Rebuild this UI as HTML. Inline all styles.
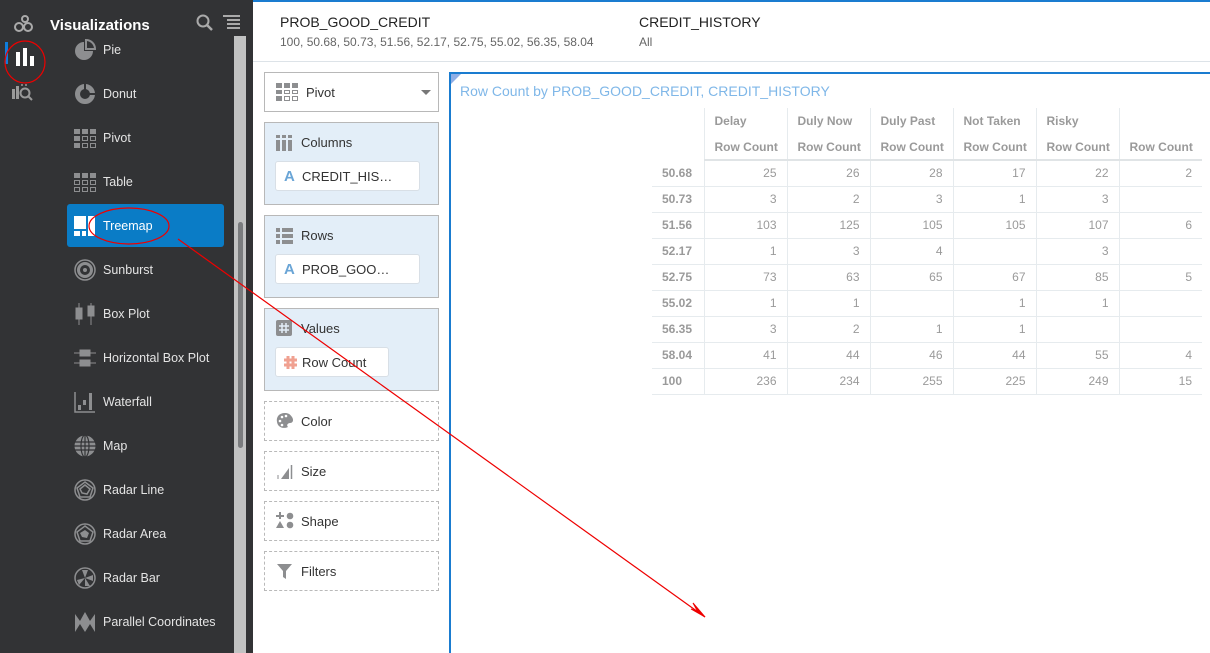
<!DOCTYPE html>
<html><head><meta charset="utf-8"><style>
*{margin:0;padding:0;box-sizing:border-box}
body{width:1210px;height:653px;overflow:hidden;background:#fff;font-family:"Liberation Sans",sans-serif;position:relative}
.side{position:absolute;left:0;top:0;width:253px;height:653px;background:#323335}
.a{position:absolute}
.item{position:absolute;left:103px;color:#e4e4e4;font-size:12.5px}
.ic{position:absolute;left:74px;width:22px;height:22px}
.sb{position:absolute;left:234px;top:36px;width:12px;height:617px;background:#c1c2c2}
.th{position:absolute;left:238px;top:222px;width:5px;height:226px;background:#7a7c7e;border-radius:3px}
.box{position:absolute;left:264px;width:175px;background:#e3eef8;border:1px solid #b8b8b8}
.box .t{position:absolute;left:36px;top:12px;font-size:13px;color:#333}
.pill{position:absolute;left:10px;top:38px;height:30px;background:#fff;border:1px solid #d8dfe6;border-radius:3px;font-size:13px;color:#333;padding:7px 0 0 26px;white-space:nowrap}
.dash{position:absolute;left:264px;width:175px;height:40px;border:1px dashed #b9b9b9;font-size:13px;color:#333}
.dash span{position:absolute;left:36px;top:12px}
table{position:absolute;left:652px;top:108px;width:550px;border-collapse:collapse;font-size:12px;color:#9a9a9a;table-layout:fixed}
td{height:26px;border-bottom:1px solid #e6ebee;padding:0 10px;text-align:right;white-space:nowrap;overflow:hidden}
td.c{border-left:1px solid #e6ebee}
td.l{text-align:left;font-weight:bold;color:#9a9a9a;padding-left:10px}
tr.h td{text-align:left;font-weight:bold;border-bottom:none}
tr.h2 td{border-bottom:2px solid #e0e4e6}
</style></head><body>
<div class="side">
  <svg class="a" style="left:14px;top:15px" width="20" height="18"><circle cx="5" cy="12" r="4" fill="none" stroke="#aaa" stroke-width="2"/><circle cx="14" cy="12" r="4" fill="none" stroke="#aaa" stroke-width="2"/><circle cx="11" cy="4" r="3" fill="none" stroke="#aaa" stroke-width="2"/></svg>
  <div class="a" style="left:5px;top:42px;width:3px;height:22px;background:#0f7ddb"></div>
  <svg class="a" style="left:15px;top:47px" width="20" height="20"><rect x="1" y="5" width="4" height="14" fill="#fff"/><rect x="8" y="1" width="4" height="18" fill="#fff"/><rect x="15" y="9" width="4" height="10" fill="#fff"/></svg>
  <svg class="a" style="left:12px;top:83px" width="22" height="20"><rect x="0" y="6" width="3" height="10" fill="#999"/><rect x="4" y="3" width="3" height="13" fill="#999"/><circle cx="13" cy="10" r="4.5" fill="none" stroke="#999" stroke-width="2"/><line x1="16" y1="13" x2="20" y2="17" stroke="#999" stroke-width="2"/><circle cx="10" cy="2" r="1" fill="#999"/><circle cx="14" cy="2" r="1" fill="#999"/></svg>
  <div class="a" style="left:50px;top:17px;color:#fff;font-weight:bold;font-size:15px">Visualizations</div>
  <svg class="a" style="left:196px;top:14px" width="18" height="18"><circle cx="7" cy="7" r="5.5" fill="none" stroke="#aaa" stroke-width="2"/><line x1="11" y1="11" x2="16" y2="16" stroke="#aaa" stroke-width="2.5"/></svg>
  <svg class="a" style="left:223px;top:15px" width="18" height="16"><g stroke="#aaa" stroke-width="2"><line x1="0" y1="1" x2="17" y2="1"/><line x1="4" y1="5" x2="17" y2="5"/><line x1="4" y1="9" x2="17" y2="9"/><line x1="4" y1="13" x2="17" y2="13"/></g></svg>
  <div class="sb"></div><div class="th"></div>
  <div class="a" style="left:67px;top:204px;width:157px;height:43px;background:#0a7cc6;border-radius:3px"></div>

  <svg class="ic" style="top:39px"><path d="M10 3 A9 9 0 1 0 19 12 L10 12Z" fill="#8d8e90"/><path d="M12 1 A9 9 0 0 1 21 10 L12 10Z" fill="none" stroke="#8d8e90" stroke-width="2"/></svg><div class="item" style="top:43px">Pie</div>
  <svg class="ic" style="top:83px"><circle cx="11" cy="11" r="7.5" fill="none" stroke="#8d8e90" stroke-width="5"/><path d="M11 0 L11 11 L22 11" fill="none" stroke="#323335" stroke-width="2"/></svg><div class="item" style="top:87px">Donut</div>
  <svg class="ic" style="top:128px"><g fill="#8d8e90"><rect x="0" y="1" width="6" height="5"/><rect x="8" y="1" width="6" height="5"/><rect x="16" y="1" width="6" height="5"/><rect x="0" y="8" width="6" height="5"/><rect x="0" y="15" width="6" height="5"/></g><g fill="none" stroke="#8d8e90"><rect x="8.5" y="8.5" width="5" height="4"/><rect x="16.5" y="8.5" width="5" height="4"/><rect x="8.5" y="15.5" width="5" height="4"/><rect x="16.5" y="15.5" width="5" height="4"/></g></svg><div class="item" style="top:131px">Pivot</div>
  <svg class="ic" style="top:172px"><g fill="#8d8e90"><rect x="0" y="1" width="6" height="5"/><rect x="8" y="1" width="6" height="5"/><rect x="16" y="1" width="6" height="5"/></g><g fill="none" stroke="#8d8e90"><rect x="0.5" y="8.5" width="5" height="4"/><rect x="8.5" y="8.5" width="5" height="4"/><rect x="16.5" y="8.5" width="5" height="4"/><rect x="0.5" y="15.5" width="5" height="4"/><rect x="8.5" y="15.5" width="5" height="4"/><rect x="16.5" y="15.5" width="5" height="4"/></g></svg><div class="item" style="top:175px">Table</div>
  <svg class="ic" style="top:215px"><g fill="#fff"><rect x="0" y="1" width="12" height="13"/><rect x="14" y="1" width="7" height="20"/><rect x="0" y="16" width="6" height="5"/><rect x="8" y="16" width="4" height="5"/></g></svg><div class="item" style="top:219px;color:#fff">Treemap</div>
  <svg class="ic" style="top:259px"><circle cx="11" cy="11" r="10" fill="none" stroke="#8d8e90" stroke-width="1.5"/><circle cx="11" cy="11" r="6.5" fill="none" stroke="#8d8e90" stroke-width="3"/><circle cx="11" cy="11" r="2" fill="#8d8e90"/></svg><div class="item" style="top:263px">Sunburst</div>
  <svg class="ic" style="top:303px"><g fill="#8d8e90" stroke="#8d8e90"><line x1="5" y1="0" x2="5" y2="22"/><rect x="2" y="5" width="6" height="11"/><line x1="17" y1="0" x2="17" y2="22"/><rect x="14" y="3" width="6" height="10"/></g></svg><div class="item" style="top:307px">Box Plot</div>
  <svg class="ic" style="top:347px"><g fill="#8d8e90" stroke="#8d8e90"><line x1="0" y1="6" x2="22" y2="6"/><rect x="6" y="3" width="10" height="6"/><line x1="0" y1="16" x2="22" y2="16"/><rect x="6" y="13" width="10" height="6"/></g></svg><div class="item" style="top:351px">Horizontal Box Plot</div>
  <svg class="ic" style="top:391px"><path d="M1 1V21H21" fill="none" stroke="#8d8e90" stroke-width="1.5"/><g fill="#8d8e90"><rect x="4" y="14" width="3" height="5"/><rect x="9" y="9" width="3" height="5"/><rect x="15" y="2" width="3" height="17"/></g></svg><div class="item" style="top:395px">Waterfall</div>
  <svg class="ic" style="top:435px"><circle cx="11" cy="11" r="10.5" fill="#8d8e90"/><g stroke="#323335" stroke-width="1.2" fill="none"><line x1="0" y1="7" x2="22" y2="7"/><line x1="0" y1="11" x2="22" y2="11"/><line x1="0" y1="15" x2="22" y2="15"/><ellipse cx="11" cy="11" rx="4" ry="11"/><line x1="11" y1="0" x2="11" y2="22"/></g></svg><div class="item" style="top:439px">Map</div>
  <svg class="ic" style="top:479px"><circle cx="11" cy="11" r="10" fill="none" stroke="#8d8e90" stroke-width="1.5"/><path d="M11 3 L19 9 L16 18 L6 18 L3 9Z M11 6 L16 10 L13 15 L8 14 L6 10Z" fill="none" stroke="#8d8e90" stroke-width="1.5"/></svg><div class="item" style="top:483px">Radar Line</div>
  <svg class="ic" style="top:523px"><circle cx="11" cy="11" r="10" fill="none" stroke="#8d8e90" stroke-width="1.5"/><path d="M11 3 L19 9 L16 18 L6 18 L3 9Z" fill="none" stroke="#8d8e90" stroke-width="1.5"/><path d="M11 7 L15 10 L13 15 L8 14 L6 10Z" fill="#8d8e90"/></svg><div class="item" style="top:527px">Radar Area</div>
  <svg class="ic" style="top:567px"><circle cx="11" cy="11" r="10" fill="none" stroke="#8d8e90" stroke-width="1.5"/><g fill="#8d8e90"><path d="M11 11 L8 3 L14 3Z"/><path d="M11 11 L19 8 L19 14Z"/><path d="M11 11 L5 18 L3 13Z"/><path d="M11 11 L16 19 L11 19Z"/></g></svg><div class="item" style="top:571px">Radar Bar</div>
  <svg class="ic" style="top:611px"><path d="M1 3 L6 10 L11 1 L16 10 L21 3 V21 L16 13 L11 21 L6 13 L1 21Z" fill="#8d8e90"/></svg><div class="item" style="top:615px">Parallel Coordinates</div>
</div>

<div class="a" style="left:253px;top:0;width:957px;height:2px;background:#1a7cd0"></div>
<div class="a" style="left:253px;top:61px;width:957px;height:1px;background:#dde3e8"></div>
<div class="a" style="left:280px;top:14px;font-size:14px;color:#222">PROB_GOOD_CREDIT</div>
<div class="a" style="left:280px;top:35px;font-size:12px;color:#666">100, 50.68, 50.73, 51.56, 52.17, 52.75, 55.02, 56.35, 58.04</div>
<div class="a" style="left:639px;top:14px;font-size:14px;color:#222">CREDIT_HISTORY</div>
<div class="a" style="left:639px;top:35px;font-size:12px;color:#666">All</div>

<div class="a" style="left:264px;top:72px;width:175px;height:40px;border:1px solid #b8b8b8;background:#fff">
  <svg class="a" style="left:11px;top:9px" width="22" height="20"><g fill="#8d8e90"><rect x="0" y="1" width="6" height="5"/><rect x="8" y="1" width="6" height="5"/><rect x="16" y="1" width="6" height="5"/><rect x="0" y="8" width="6" height="4"/><rect x="0" y="14" width="6" height="5"/></g><g fill="none" stroke="#8d8e90"><rect x="8.5" y="8.5" width="5" height="3"/><rect x="16.5" y="8.5" width="5" height="3"/><rect x="8.5" y="14.5" width="5" height="4"/><rect x="16.5" y="14.5" width="5" height="4"/></g></svg>
  <span class="a" style="left:41px;top:12px;font-size:13px;color:#333">Pivot</span>
  <div class="a" style="left:156px;top:17px;border-left:5px solid transparent;border-right:5px solid transparent;border-top:5px solid #777"></div>
</div>

<div class="box" style="top:122px;height:83px"><svg class="a" style="left:11px;top:12px" width="18" height="17"><g fill="#8d8e90"><rect x="0" y="0" width="4" height="3"/><rect x="6" y="0" width="4" height="3"/><rect x="12" y="0" width="4" height="3"/><rect x="0" y="5" width="4" height="11"/><rect x="6" y="5" width="4" height="11"/><rect x="12" y="5" width="4" height="11"/></g></svg><span class="t">Columns</span><div class="pill" style="width:145px"><span class="a" style="left:8px;top:6px;color:#6aa5d6;font-weight:bold;font-size:15px">A</span>CREDIT_HIS…</div></div>
<div class="box" style="top:215px;height:83px"><svg class="a" style="left:11px;top:12px" width="18" height="17"><g fill="#8d8e90"><rect x="0" y="0" width="4" height="4"/><rect x="6" y="0" width="11" height="4"/><rect x="0" y="6" width="4" height="4"/><rect x="6" y="6" width="11" height="4"/><rect x="0" y="12" width="4" height="4"/><rect x="6" y="12" width="11" height="4"/></g></svg><span class="t">Rows</span><div class="pill" style="width:145px"><span class="a" style="left:8px;top:6px;color:#6aa5d6;font-weight:bold;font-size:15px">A</span>PROB_GOO…</div></div>
<div class="box" style="top:308px;height:83px"><svg class="a" style="left:11px;top:11px" width="17" height="17"><rect width="16" height="16" rx="2" fill="#8d8e90"/><g stroke="#e3eef8" stroke-width="1.5"><line x1="6" y1="3" x2="6" y2="13"/><line x1="10" y1="3" x2="10" y2="13"/><line x1="3" y1="6" x2="13" y2="6"/><line x1="3" y1="10" x2="13" y2="10"/></g></svg><span class="t">Values</span><div class="pill" style="width:114px"><svg class="a" style="left:8px;top:8px" width="13" height="13"><g stroke="#f0a191" stroke-width="3"><line x1="4" y1="0" x2="4" y2="13"/><line x1="9" y1="0" x2="9" y2="13"/><line x1="0" y1="4" x2="13" y2="4"/><line x1="0" y1="9" x2="13" y2="9"/></g></svg>Row Count</div></div>

<div class="dash" style="top:401px"><svg class="a" style="left:11px;top:10px" width="18" height="18"><path d="M9 1 C3 1 0 5 1 10 C2 16 8 17 12 15 C10 13 12 11 14 11 C17 11 18 8 16 5 C14 2 12 1 9 1Z" fill="#8d8e90"/><g fill="#fff"><circle cx="6" cy="5" r="1.3"/><circle cx="10" cy="4" r="1.3"/><circle cx="4" cy="9" r="1.3"/><circle cx="6" cy="13" r="1.3"/></g></svg><span>Color</span></div>
<div class="dash" style="top:451px"><svg class="a" style="left:11px;top:10px" width="18" height="18"><path d="M5 17 L13 6 V17Z" fill="#8d8e90"/><line x1="15.5" y1="3" x2="15.5" y2="17" stroke="#8d8e90" stroke-width="1.5"/><line x1="2" y1="13" x2="2" y2="17" stroke="#8d8e90"/></svg><span>Size</span></div>
<div class="dash" style="top:501px"><svg class="a" style="left:11px;top:10px" width="18" height="18"><g fill="#8d8e90"><rect x="3" y="0" width="2" height="7"/><rect x="0" y="3" width="8" height="2"/><circle cx="14" cy="4" r="3.3"/><path d="M4 9 L8 16 L0 16Z"/><circle cx="14" cy="13" r="3.3"/></g></svg><span>Shape</span></div>
<div class="dash" style="top:551px"><svg class="a" style="left:11px;top:11px" width="18" height="18"><path d="M1 1 H16 L10 8 V16 L7 14 V8Z" fill="#8d8e90"/></svg><span>Filters</span></div>

<div class="a" style="left:449px;top:72px;width:761px;height:581px;border-left:2px solid #1a7cd0;border-top:2px solid #1a7cd0"></div>
<div class="a" style="left:451px;top:74px;width:0;height:0;border-top:10px solid #8eaee6;border-right:10px solid transparent"></div>
<div class="a" style="left:460px;top:83px;font-size:14px;color:#7fb7e8">Row Count by PROB_GOOD_CREDIT, CREDIT_HISTORY</div>

<table>
<colgroup><col style="width:52px"><col style="width:83px"><col style="width:83px"><col style="width:83px"><col style="width:83px"><col style="width:83px"><col style="width:83px"></colgroup>
<tr class="h"><td class="l" style="border-bottom:none"></td><td class="c">Delay</td><td class="c">Duly Now</td><td class="c">Duly Past</td><td class="c">Not Taken</td><td class="c">Risky</td><td class="c"></td></tr>
<tr class="h h2"><td class="l" style="border-bottom:none"></td><td class="c">Row Count</td><td class="c">Row Count</td><td class="c">Row Count</td><td class="c">Row Count</td><td class="c">Row Count</td><td class="c">Row Count</td></tr>
<tr><td class="l">50.68</td><td class="c">25</td><td class="c">26</td><td class="c">28</td><td class="c">17</td><td class="c">22</td><td class="c">2</td></tr>
<tr><td class="l">50.73</td><td class="c">3</td><td class="c">2</td><td class="c">3</td><td class="c">1</td><td class="c">3</td><td class="c"></td></tr>
<tr><td class="l">51.56</td><td class="c">103</td><td class="c">125</td><td class="c">105</td><td class="c">105</td><td class="c">107</td><td class="c">6</td></tr>
<tr><td class="l">52.17</td><td class="c">1</td><td class="c">3</td><td class="c">4</td><td class="c"></td><td class="c">3</td><td class="c"></td></tr>
<tr><td class="l">52.75</td><td class="c">73</td><td class="c">63</td><td class="c">65</td><td class="c">67</td><td class="c">85</td><td class="c">5</td></tr>
<tr><td class="l">55.02</td><td class="c">1</td><td class="c">1</td><td class="c"></td><td class="c">1</td><td class="c">1</td><td class="c"></td></tr>
<tr><td class="l">56.35</td><td class="c">3</td><td class="c">2</td><td class="c">1</td><td class="c">1</td><td class="c"></td><td class="c"></td></tr>
<tr><td class="l">58.04</td><td class="c">41</td><td class="c">44</td><td class="c">46</td><td class="c">44</td><td class="c">55</td><td class="c">4</td></tr>
<tr><td class="l">100</td><td class="c">236</td><td class="c">234</td><td class="c">255</td><td class="c">225</td><td class="c">249</td><td class="c">15</td></tr>
</table>

<svg class="a" style="left:0;top:0" width="1210" height="653">
<g fill="none" stroke="#e00" stroke-width="1.2">
<ellipse cx="25" cy="62" rx="20" ry="21"/>
<ellipse cx="129" cy="226" rx="40" ry="18"/>
<line x1="178" y1="239" x2="705" y2="617"/>
</g>
<path d="M705 617 L693 603 L698 612 Z M705 617 L691 609 L697 611Z" fill="#e00" stroke="#e00"/>
</svg>
</body></html>
